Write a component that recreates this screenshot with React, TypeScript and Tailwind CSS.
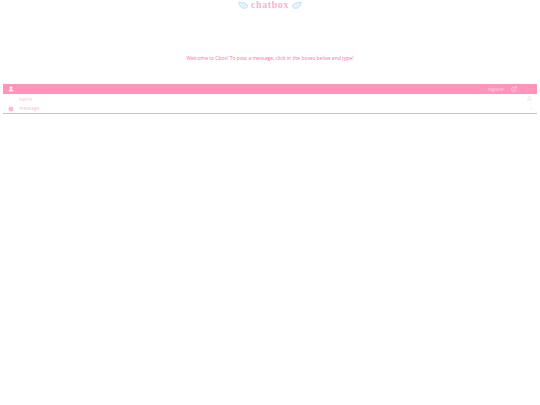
import { Bell, ExternalLink, Settings, Smile, User } from 'lucide-react';

function Wing({ flip }: { flip?: boolean }) {
    return (
        <svg width="11" height="8" viewBox="0 0 11 8" className={flip ? '-scale-x-100' : ''}>
            <path d="M1 1c2 1 5 0 7 2l2 2c-1 2-3 3-5 2C3 7 1 4 1 1z" fill="#e3f4fb" stroke="#bfe2ef" strokeWidth="1" />
        </svg>
    );
}

export default function App() {
    return (
        <div className="min-h-screen bg-white font-['Open_Sans',sans-serif] text-[#fb6bb0]">
            <div className="flex h-[10px] items-center justify-center gap-[2px]">
                <Wing />
                <span className="font-['Liberation_Serif',serif] text-[10px] leading-[10px] font-bold tracking-[0.6px] text-[#ffb0d6]">chatbox</span>
                <Wing flip />
            </div>
            <p className="mt-[43px] text-center text-[5px] leading-[10px]">
                Welcome to Cbox! To post a message, click in the boxes below and type!
            </p>
            <div className="mx-[3px] mt-[21px] border-b border-[#f0a8e0]">
                <div className="flex h-[10px] items-center bg-[#ff94bb] pl-[5px] pr-[7px] text-white">
                    <User size={6} fill="white" />
                    <span className="ml-auto text-[4.5px] text-[#ffd3e3]">register</span>
                    <ExternalLink size={6} className="ml-[7px] text-[#ffeaf2]" />
                    <Settings size={5} className="ml-[8px] text-[#ffa4c7]" />
                </div>
                <div className="flex h-[10px] items-center pl-[16px] pr-[5px] pt-[1px] text-[#f7c4dc]">
                    <span className="text-[5px]">name</span>
                    <Bell size={5} className="ml-auto -translate-y-[1px]" />
                </div>
                <div className="flex h-[9px] items-center pl-[5px] pr-[5px] text-[#f7bcd8]">
                    <Smile size={6} fill="#f4a6cb" className="text-white" />
                    <span className="ml-[5px] text-[5px]">message</span>
                    <span className="ml-auto text-[5px]">›</span>
                </div>
            </div>
        </div>
    );
}
